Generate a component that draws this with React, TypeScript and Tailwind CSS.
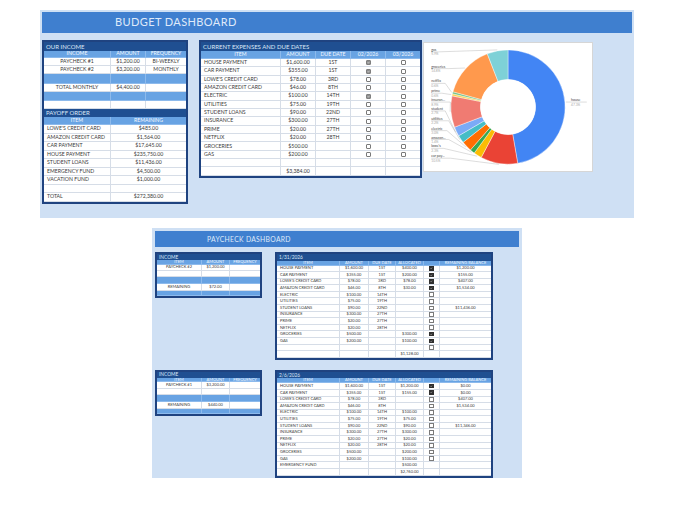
import type { ReactNode } from 'react'
import clsx from 'clsx'

type Tone = 'white' | 'head' | 'band'

const tones: Record<Tone, string> = {
  white: 'bg-white text-[#3a3a3a] border-[#d6dde7]',
  head: 'bg-[#68a3e3] text-[#f2f7fd] border-[#8dbaec]',
  band: 'bg-[#68a3e3] border-[#8dbaec]',
}

const cellLines: Record<Tone, string> = {
  white: 'border-[#d6dde7]',
  head: 'border-[#8dbaec]',
  band: 'border-[#8dbaec]',
}

function Row({
  w,
  cells = [],
  h,
  tone = 'white',
  left = [],
}: {
  w: string[]
  cells?: ReactNode[]
  h: string
  tone?: Tone
  left?: number[]
}) {
  return (
    <div className={clsx('flex border-b', h, tones[tone])}>
      {w.map((cw, i) => (
        <div
          key={i}
          className={clsx(
            cw,
            cellLines[tone],
            'flex h-full shrink-0 items-center overflow-hidden whitespace-nowrap border-r last:border-r-0',
            left.includes(i) ? 'justify-start pl-[3px]' : 'justify-center',
          )}
        >
          {cells[i]}
        </div>
      ))}
    </div>
  )
}

function Title({ children, h, size }: { children: ReactNode; h: string; size: string }) {
  return (
    <div className={clsx('flex items-center bg-[#1f4f91] pl-[2px] text-[#dbe7f6]', h, size)}>{children}</div>
  )
}

function Box({ on, small }: { on: boolean; small?: boolean }) {
  return (
    <span
      className={clsx(
        'flex items-center justify-center',
        small ? 'h-[4.5px] w-[4.5px] rounded-none border-[0.6px]' : 'h-[5px] w-[5px] rounded-[1px] border-[0.75px]',
        on
          ? small
            ? 'border-[#2f2f2f] bg-[#2f2f2f]'
            : 'border-[#808080] bg-[#8e8e8e]'
          : 'border-[#7a7a7a] bg-white',
      )}
    >
      {on && (
        <svg viewBox="0 0 10 10" className="h-full w-full">
          <path d="M2 5.2 4.2 7.4 8.2 2.8" fill="none" stroke="white" strokeWidth="1.7" />
        </svg>
      )}
    </span>
  )
}

const incW = ['w-[67px]', 'w-[35px]', 'w-[40px]']
const payW = ['w-[67px]', 'w-[75px]']
const expW = ['w-[80px]', 'w-[35px]', 'w-[35px]', 'w-[35px]', 'w-[34px]']

const payoff = [
  ["LOWE'S CREDIT CARD", '$485.00'],
  ['AMAZON CREDIT CARD', '$1,564.00'],
  ['CAR PAYMENT', '$17,645.00'],
  ['HOUSE PAYMENT', '$235,750.00'],
  ['STUDENT LOANS', '$11,436.00'],
  ['EMERGENCY FUND', '$4,500.00'],
  ['VACATION FUND', '$1,000.00'],
  ['', ''],
  ['TOTAL', '$272,380.00'],
]

const expenses: [string, string, string, boolean][] = [
  ['HOUSE PAYMENT', '$1,600.00', '1ST', true],
  ['CAR PAYMENT', '$355.00', '1ST', true],
  ["LOWE'S CREDIT CARD", '$78.00', '3RD', false],
  ['AMAZON CREDIT CARD', '$46.00', '8TH', false],
  ['ELECTRIC', '$100.00', '14TH', true],
  ['UTILITIES', '$75.00', '19TH', false],
  ['STUDENT LOANS', '$90.00', '22ND', false],
  ['INSURANCE', '$300.00', '27TH', false],
  ['PRIME', '$20.00', '27TH', false],
  ['NETFLIX', '$20.00', '28TH', false],
  ['GROCERIES', '$500.00', '', false],
  ['GAS', '$200.00', '', false],
]

function LeftBlock() {
  return (
    <div className="w-[146px] shrink-0 border-2 border-[#1f4380] bg-white text-[5.2px] leading-none">
      <Title h="h-[9px]" size="text-[6px]">OUR INCOME</Title>
      <Row w={incW} h="h-[7px]" tone="head" cells={['INCOME', 'AMOUNT', 'FREQUENCY']} />
      <Row w={incW} h="h-[8px]" cells={['PAYCHECK #1', '$1,200.00', 'BI-WEEKLY']} />
      <Row w={incW} h="h-[8px]" cells={['PAYCHECK #2', '$3,200.00', 'MONTHLY']} />
      <Row w={incW} h="h-[10px]" tone="band" />
      <Row w={incW} h="h-[8px]" cells={['TOTAL MONTHLY', '$4,400.00', '']} />
      <Row w={incW} h="h-[9px]" tone="band" />
      <Row w={incW} h="h-[8px]" />
      <Title h="h-[8px]" size="text-[6px]">PAYOFF ORDER</Title>
      <Row w={payW} h="h-[8px]" tone="head" cells={['ITEM', 'REMAINING']} />
      {payoff.map(([a, b], i) => (
        <Row key={i} w={payW} h="h-[8.5px]" left={[0]} cells={[a, b]} />
      ))}
    </div>
  )
}

function Expenses() {
  return (
    <div className="ml-[11px] w-[223px] shrink-0 border-2 border-[#1f4380] bg-white text-[5.2px] leading-none">
      <Title h="h-[9px]" size="text-[6px]">CURRENT EXPENSES AND DUE DATES</Title>
      <Row w={expW} h="h-[8px]" tone="head" cells={['ITEM', 'AMOUNT', 'DUE DATE', '02/2026', '03/2026']} />
      {expenses.map(([item, amt, due, paid]) => (
        <Row
          key={item}
          w={expW}
          h="h-[8.35px]"
          left={[0]}
          cells={[item, amt, due, <Box on={paid} />, <Box on={false} />]}
        />
      ))}
      <Row w={expW} h="h-[8.35px]" />
      <Row w={expW} h="h-[8.35px]" cells={['', '$3,384.00']} />
    </div>
  )
}

const slices = [
  { name: 'house', v: 1600, c: '#4285f4', ly: 0 },
  { name: 'car pay...', v: 355, c: '#ea4335', ly: 116 },
  { name: "lowe's", v: 78, c: '#fbbc04', ly: 106 },
  { name: 'amazon...', v: 46, c: '#34a853', ly: 97 },
  { name: 'electric', v: 100, c: '#ff6d01', ly: 88 },
  { name: 'utilities', v: 75, c: '#46bdc6', ly: 78 },
  { name: 'student', v: 90, c: '#7baaf7', ly: 68 },
  { name: 'insuran...', v: 300, c: '#f07b72', ly: 59 },
  { name: 'prime', v: 20, c: '#fcd04f', ly: 50 },
  { name: 'netflix', v: 20, c: '#71c287', ly: 40 },
  { name: 'groceries', v: 500, c: '#ff994d', ly: 25 },
  { name: 'gas', v: 200, c: '#7ed1d7', ly: 8 },
]

function Donut() {
  const cx = 85
  const cy = 65
  const R = 58
  const r = 28
  const total = slices.reduce((s, x) => s + x.v, 0)
  const pt = (a: number, rad: number) => [cx + rad * Math.sin(a), cy - rad * Math.cos(a)]
  let acc = 0
  const parts = slices.map((s) => {
    const a0 = (acc / total) * Math.PI * 2
    acc += s.v
    const a1 = (acc / total) * Math.PI * 2
    const large = a1 - a0 > Math.PI ? 1 : 0
    const [x0, y0] = pt(a0, R)
    const [x1, y1] = pt(a1, R)
    const [x2, y2] = pt(a1, r)
    const [x3, y3] = pt(a0, r)
    const d = `M${x0} ${y0}A${R} ${R} 0 ${large} 1 ${x1} ${y1}L${x2} ${y2}A${r} ${r} 0 ${large} 0 ${x3} ${y3}Z`
    const mid = (a0 + a1) / 2
    return { ...s, d, mid, pct: ((s.v / total) * 100).toFixed(1) + '%' }
  })
  return (
    <svg viewBox="0 0 170 130" className="h-full w-full">
      {parts.map((p) => (
        <path key={p.name} d={p.d} fill={p.c} stroke="white" strokeWidth="0.4" />
      ))}
      <circle cx={cx} cy={cy} r={r} fill="white" />
      {parts.map((p) => {
        const [px, py] = pt(p.mid, R + 1)
        if (p.name === 'house') {
          return (
            <g key={p.name}>
              <polyline points={`${px},${py} 149,60 165,60`} fill="none" stroke="#9a9a9a" strokeWidth="0.35" />
              <text x="149" y="58.8" fontSize="3.6" fill="#444">house</text>
              <text x="149" y="63.8" fontSize="3.4" fill="#aaa">{p.pct}</text>
            </g>
          )
        }
        const ux = 7 + p.name.length * 1.75 + 2
        return (
          <g key={p.name}>
            <polyline
              points={`7,${p.ly + 1} ${ux},${p.ly + 1} ${px},${py}`}
              fill="none"
              stroke="#9a9a9a"
              strokeWidth="0.35"
            />
            <text x="7" y={p.ly} fontSize="3.6" fill="#444">{p.name}</text>
            <text x="7" y={p.ly + 4.6} fontSize="3.4" fill="#aaa">{p.pct}</text>
          </g>
        )
      })}
    </svg>
  )
}

const incSW = ['w-[45px]', 'w-[28px]', 'w-[30px]']
const paySW = ['w-[63px]', 'w-[29px]', 'w-[27px]', 'w-[28px]', 'w-[16px]', 'w-[51px]']

type PRow = { item: string; amt: string; due: string; alloc: string; box: boolean | null; rem: string }

const items: [string, string, string][] = [
  ['HOUSE PAYMENT', '$1,600.00', '1ST'],
  ['CAR PAYMENT', '$355.00', '1ST'],
  ["LOWE'S CREDIT CARD", '$78.00', '3RD'],
  ['AMAZON CREDIT CARD', '$46.00', '8TH'],
  ['ELECTRIC', '$100.00', '14TH'],
  ['UTILITIES', '$75.00', '19TH'],
  ['STUDENT LOANS', '$90.00', '22ND'],
  ['INSURANCE', '$300.00', '27TH'],
  ['PRIME', '$20.00', '27TH'],
  ['NETFLIX', '$20.00', '28TH'],
  ['GROCERIES', '$500.00', ''],
  ['GAS', '$200.00', ''],
]

const build = (alloc: string[], boxes: (boolean | null)[], rem: string[]): PRow[] =>
  items.map(([item, amt, due], i) => ({ item, amt, due, alloc: alloc[i], box: boxes[i], rem: rem[i] }))

const first: PRow[] = [
  ...build(
    ['$400.00', '$200.00', '$78.00', '$30.00', '', '', '', '', '', '', '$300.00', '$100.00'],
    [true, true, true, true, false, false, false, false, false, false, true, true],
    ['$1,200.00', '$155.00', '$407.00', '$1,534.00', '', '', '$11,436.00', '', '', '', '', ''],
  ),
  { item: '', amt: '', due: '', alloc: '', box: false, rem: '' },
  { item: '', amt: '', due: '', alloc: '$1,128.00', box: null, rem: '' },
]

const second: PRow[] = [
  ...build(
    ['$1,200.00', '$155.00', '', '', '$100.00', '$75.00', '$90.00', '$300.00', '$20.00', '$20.00', '$200.00', '$100.00'],
    [true, true, false, false, false, false, false, false, false, false, false, false],
    ['$0.00', '$0.00', '$407.00', '$1,534.00', '', '', '$11,346.00', '', '', '', '', ''],
  ),
  { item: 'EMERGENCY FUND', amt: '', due: '', alloc: '$500.00', box: null, rem: '' },
  { item: '', amt: '', due: '', alloc: '$2,760.00', box: null, rem: '' },
]

function IncomeSmall({ check, amount, remaining }: { check: string; amount: string; remaining: string }) {
  return (
    <div className="w-[107px] shrink-0 border-2 border-[#1f4380] bg-white text-[4px] leading-none">
      <Title h="h-[6px]" size="text-[4.8px]">INCOME</Title>
      <Row w={incSW} h="h-[4.5px]" tone="head" cells={['ITEM', 'AMOUNT', 'FREQUENCY']} />
      <Row w={incSW} h="h-[6.5px]" cells={[check, amount, '']} />
      <Row w={incSW} h="h-[6px]" />
      <Row w={incSW} h="h-[7px]" tone="band" />
      <Row w={incSW} h="h-[7px]" cells={['REMAINING', remaining, '']} />
      <Row w={incSW} h="h-[5px]" tone="band" />
    </div>
  )
}

function PaySmall({ date, rows }: { date: string; rows: PRow[] }) {
  return (
    <div className="ml-[13px] w-[218px] shrink-0 border-2 border-[#1f4380] bg-white text-[4px] leading-none">
      <Title h="h-[6.5px]" size="text-[4.8px]">{date}</Title>
      <Row
        w={paySW}
        h="h-[5px]"
        tone="head"
        cells={['ITEM', 'AMOUNT', 'DUE DATE', 'ALLOCATED', '', 'REMAINING BALANCE']}
      />
      {rows.map((r, i) => (
        <Row
          key={i}
          w={paySW}
          h="h-[6.6px]"
          left={[0]}
          cells={[r.item, r.amt, r.due, r.alloc, r.box === null ? null : <Box small on={r.box} />, r.rem]}
        />
      ))}
    </div>
  )
}

export default function App() {
  return (
    <div className="min-h-[525px] w-[680px] bg-white pt-[10px] font-['Lato',sans-serif] text-[#333]">
      <section className="ml-[40px] h-[208px] w-[594px] bg-[#cfe0f4] p-[2px]">
        <div className="flex h-[21px] items-center bg-[#3f7fcf] pl-[73px] text-[11px] tracking-[0.4px] text-[#dfeafa]">
          BUDGET DASHBOARD
        </div>
        <div className="mt-[7px] flex items-start">
          <LeftBlock />
          <Expenses />
          <div className="ml-[1px] mt-[2px] h-[130px] w-[170px] shrink-0 border border-[#d6d6d6] bg-white">
            <Donut />
          </div>
        </div>
      </section>

      <section className="ml-[152px] mt-[10px] h-[250px] w-[370px] bg-[#cfe0f4] p-[3px]">
        <div className="flex h-[16px] items-center bg-[#3f7fcf] pl-[52px] text-[6.8px] tracking-[0.3px] text-[#dfeafa]">
          PAYCHECK DASHBOARD
        </div>
        <div className="mt-[5px] flex items-start">
          <IncomeSmall check="PAYCHECK #2" amount="$1,200.00" remaining="$72.00" />
          <PaySmall date="1/31/2026" rows={first} />
        </div>
        <div className="mt-[10px] flex items-start">
          <IncomeSmall check="PAYCHECK #1" amount="$3,200.00" remaining="$440.00" />
          <PaySmall date="2/6/2026" rows={second} />
        </div>
      </section>
    </div>
  )
}
